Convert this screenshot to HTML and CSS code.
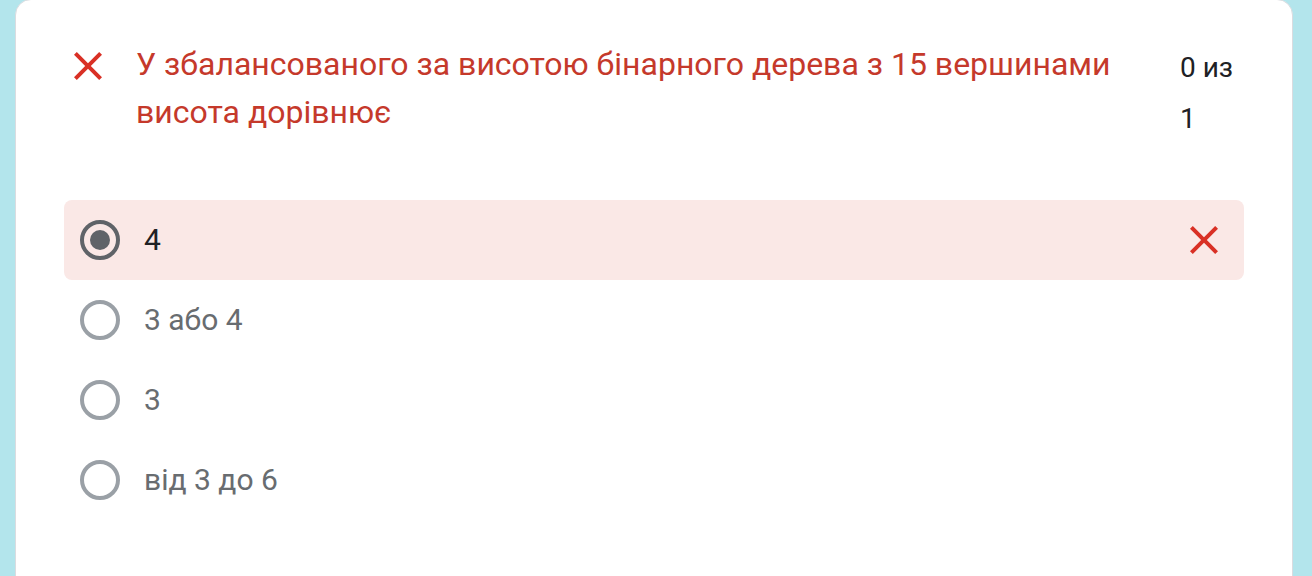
FILE: index.html
```html
<!DOCTYPE html>
<html lang="uk">
<head>
<meta charset="utf-8">
<title>Quiz</title>
<link rel="stylesheet" href="styles.css">
</head>
<body>
<div class="card">
  <div class="header">
    <div class="head-icon">
      <svg viewBox="0 0 24 24" width="48" height="48"><path fill="#d93025" d="M19 6.41L17.59 5 12 10.59 6.41 5 5 6.41 10.59 12 5 17.59 6.41 19 12 13.41 17.59 19 19 17.59 13.41 12z"/></svg>
    </div>
    <div class="title">У збалансованого за висотою бінарного дерева з 15 вершинами висота дорівнює</div>
    <div class="score">0 из 1</div>
  </div>
  <div class="options">
    <div class="option wrong">
      <span class="radio checked"></span>
      <span class="label selected">4</span>
      <svg class="row-icon" viewBox="0 0 24 24" width="48" height="48"><path fill="#d93025" d="M19 6.41L17.59 5 12 10.59 6.41 5 5 6.41 10.59 12 5 17.59 6.41 19 12 13.41 17.59 19 19 17.59 13.41 12z"/></svg>
    </div>
    <div class="option">
      <span class="radio"></span>
      <span class="label">3 або 4</span>
    </div>
    <div class="option">
      <span class="radio"></span>
      <span class="label">3</span>
    </div>
    <div class="option">
      <span class="radio"></span>
      <span class="label">від 3 до 6</span>
    </div>
  </div>
</div>
</body>
</html>
```

FILE: styles.css
```css
html, body {
  margin: 0;
  padding: 0;
}
body {
  background: #b3e5ec;
  font-family: Roboto, "Noto Sans", Arial, sans-serif;
  height: 576px;
  overflow: hidden;
}
.card {
  margin: -1px 19px 0 15px;
  background: #fff;
  border: 1px solid #dadce0;
  border-radius: 16px;
  padding: 40px 48px 0 48px;
  height: 700px;
}
.header {
  display: flex;
  align-items: flex-start;
}
.head-icon {
  width: 48px;
  height: 48px;
  margin-top: 2px;
  margin-right: 24px;
  flex: none;
}
.head-icon svg {
  display: block;
}
.title {
  flex: 1;
  color: #c5392b;
  font-size: 32px;
  line-height: 48px;
  padding-right: 40px;
}
.score {
  width: 64px;
  flex: none;
  color: #202124;
  font-size: 28px;
  line-height: 51px;
  margin-top: 2px;
}
.options {
  margin-top: 56px;
}
.option {
  display: flex;
  align-items: center;
  height: 80px;
  padding: 0 16px;
  border-radius: 8px;
}
.option.wrong {
  background: #fae8e6;
}
.radio {
  width: 40px;
  height: 40px;
  box-sizing: border-box;
  border: 4px solid #9aa0a6;
  border-radius: 50%;
  flex: none;
  display: flex;
  align-items: center;
  justify-content: center;
}
.radio.checked {
  border-color: #5f6368;
}
.radio.checked::after {
  content: "";
  width: 20px;
  height: 20px;
  border-radius: 50%;
  background: #5f6368;
}
.label {
  margin-left: 24px;
  font-size: 30px;
  line-height: 40px;
  color: #686c70;
  flex: 1;
}
.label.selected {
  color: #202124;
}
.row-icon {
  flex: none;
  display: block;
}
```
